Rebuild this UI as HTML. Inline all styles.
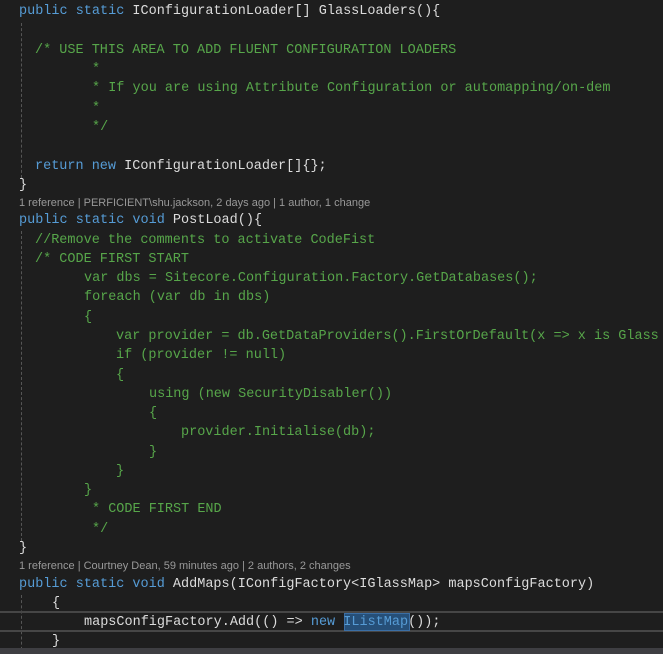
<!DOCTYPE html>
<html style="overflow:hidden;width:663px;height:654px"><head><meta charset="utf-8"><style>
html,body{overflow:hidden}
body{margin:0;width:663px;height:654px;background:#1e1e1e;position:relative;font-family:"Liberation Mono",monospace;font-size:13.5px;color:#dcdcdc}
.l{position:absolute;white-space:pre;line-height:19px;height:19px}
.k{color:#569cd6}.c{color:#57a64a}
.lens{position:absolute;left:19px;font-family:"Liberation Sans",sans-serif;font-size:11px;color:#999;white-space:pre;line-height:14px}
.g{position:absolute;left:21px;width:0;border-left:1px dashed #555}
</style></head><body>
<div class="g" style="top:23px;height:155px"></div>
<div class="g" style="top:231px;height:310px"></div>
<div class="g" style="top:595px;height:60px"></div>
<div style="position:absolute;left:0;top:611px;width:663px;height:21px;border-top:2px solid #464646;border-bottom:2px solid #464646;box-sizing:border-box"></div>
<div style="position:absolute;left:344px;top:613px;width:66px;height:18px;background:#264f78;border:1px solid #3a6ea5;box-sizing:border-box"></div>
<div style="position:absolute;left:0;top:648px;width:663px;height:6px;background:#3e3e42"></div>

<div class="l" style="left:19px;top:2px"><span class="k">public static</span> IConfigurationLoader[] GlassLoaders(){</div>
<div class="l c" style="left:35px;top:41px">/* USE THIS AREA TO ADD FLUENT CONFIGURATION LOADERS</div>
<div class="l c" style="left:92px;top:60px">*</div>
<div class="l c" style="left:92px;top:79px">* If you are using Attribute Configuration or automapping/on-dem</div>
<div class="l c" style="left:92px;top:99px">*</div>
<div class="l c" style="left:92px;top:118px">*/</div>
<div class="l" style="left:35px;top:157px"><span class="k">return new</span> IConfigurationLoader[]{};</div>
<div class="l" style="left:19px;top:176px">}</div>
<div class="lens" style="top:196px">1 reference | PERFICIENT\shu.jackson, 2 days ago | 1 author, 1 change</div>
<div class="l" style="left:19px;top:211px"><span class="k">public static void</span> PostLoad(){</div>
<div class="l c" style="left:35px;top:231px">//Remove the comments to activate CodeFist</div>
<div class="l c" style="left:35px;top:250px">/* CODE FIRST START</div>
<div class="l c" style="left:84px;top:269px">var dbs = Sitecore.Configuration.Factory.GetDatabases();</div>
<div class="l c" style="left:84px;top:288px">foreach (var db in dbs)</div>
<div class="l c" style="left:84px;top:308px">{</div>
<div class="l c" style="left:116px;top:327px">var provider = db.GetDataProviders().FirstOrDefault(x =&gt; x is Glass</div>
<div class="l c" style="left:116px;top:346px">if (provider != null)</div>
<div class="l c" style="left:116px;top:366px">{</div>
<div class="l c" style="left:149px;top:385px">using (new SecurityDisabler())</div>
<div class="l c" style="left:149px;top:404px">{</div>
<div class="l c" style="left:181px;top:423px">provider.Initialise(db);</div>
<div class="l c" style="left:149px;top:443px">}</div>
<div class="l c" style="left:116px;top:462px">}</div>
<div class="l c" style="left:84px;top:481px">}</div>
<div class="l c" style="left:92px;top:500px">* CODE FIRST END</div>
<div class="l c" style="left:92px;top:520px">*/</div>
<div class="l" style="left:19px;top:539px">}</div>
<div class="lens" style="top:559px">1 reference | Courtney Dean, 59 minutes ago | 2 authors, 2 changes</div>
<div class="l" style="left:19px;top:575px"><span class="k">public static void</span> AddMaps(IConfigFactory&lt;IGlassMap&gt; mapsConfigFactory)</div>
<div class="l" style="left:52px;top:594px">{</div>
<div class="l" style="left:84px;top:613px">mapsConfigFactory.Add(() =&gt; <span class="k">new</span> <span class="k">IListMap</span>());</div>
<div class="l" style="left:52px;top:632px">}</div>
</body></html>
